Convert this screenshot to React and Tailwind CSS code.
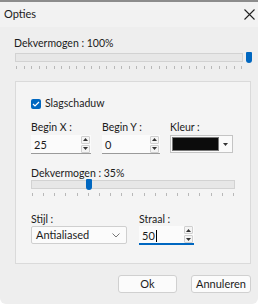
import React from 'react';

const font = { fontFamily: '"Segoe UI", Lato, "Noto Sans", sans-serif' };

const Ticks = ({ count }) => (
    <div className="flex justify-between px-[1px]">
        {Array.from({ length: count }).map((_, i) => (
            <span key={i} className="h-[3px] w-[1px] bg-[#b8b8b8]" />
        ))}
    </div>
);

const Slider = ({ thumbLeft, ticks }) => (
    <div>
        <div className="relative h-[9px] border border-[#d2d2d2] bg-[#e7e7e7]">
            <div
                className="absolute top-[-2px] h-[11px] w-[6px] rounded-b-[3px] rounded-t-[1px] bg-[#0067c0]"
                style={{ left: thumbLeft }}
            />
        </div>
        <div className="mt-[4px]">
            <Ticks count={ticks} />
        </div>
    </div>
);

const Spin = () => (
    <div className="flex w-[9px] flex-col gap-[1px]">
        <div className="flex h-[8px] items-center justify-center rounded-[1px] border border-[#cfcfcf] bg-[#f4f4f4]">
            <svg width="5" height="3" viewBox="0 0 5 3"><path d="M0 3 L2.5 0 L5 3 Z" fill="#333" /></svg>
        </div>
        <div className="flex h-[8px] items-center justify-center rounded-[1px] border border-[#cfcfcf] bg-[#f4f4f4]">
            <svg width="5" height="3" viewBox="0 0 5 3"><path d="M0 0 L2.5 3 L5 0 Z" fill="#333" /></svg>
        </div>
    </div>
);

const NumberInput = ({ value, width, focused }) => (
    <div
        className={`flex h-[19px] items-center justify-between bg-[#fbfbfb] pl-[3px] pr-[1px] ${
            focused ? 'border-b-2 border-[#0067c0]' : 'border-b border-[#9a9a9a]'
        }`}
        style={{ width }}
    >
        <span className="text-[11px] leading-none text-[#1a1a1a]">
            {value}
            {focused && <span className="ml-[1px] inline-block h-[12px] w-[1px] translate-y-[2px] bg-black" />}
        </span>
        <Spin />
    </div>
);

export default function App() {
    return (
        <div style={font} className="flex h-[304px] w-[258px] flex-col overflow-hidden rounded-b-[6px] border-t-2 border-[#8c8c8c] bg-[#eeeeee] text-[10.5px] text-[#1b1b1b]">
            {/* Title bar */}
            <div className="flex h-[25px] items-center justify-between bg-[#f2f2f2] pl-[4px] pr-[3px]">
                <span className="text-[11px]">Opties</span>
                <svg width="11" height="11" viewBox="0 0 11 11">
                    <path d="M0.5 0.5 L10.5 10.5 M10.5 0.5 L0.5 10.5" stroke="#222" strokeWidth="1.1" />
                </svg>
            </div>

            <div className="px-[14px] pt-[8px]">
                <div className="leading-[16px]">Dekvermogen : 100%</div>
                <div className="mt-[2px] pl-[1px] pr-[1px]">
                    <Slider thumbLeft={230} ticks={31} />
                </div>

                {/* Group box */}
                <div className="ml-[1px] mt-[12px] h-[183px] w-[236px] border border-[#dadada] bg-[#f4f4f4] pl-[15px] pt-[14px]">
                    <div className="flex h-[16px] items-center gap-[4px]">
                        <div className="flex h-[10px] w-[10px] items-center justify-center rounded-[2px] bg-[#0067c0]">
                            <svg width="8" height="6" viewBox="0 0 8 6">
                                <path d="M1 3 L3 5 L7 1" stroke="#fff" strokeWidth="1.2" fill="none" />
                            </svg>
                        </div>
                        <span>Slagschaduw</span>
                    </div>

                    <div className="mt-[7px] flex">
                        <div className="w-[71px]">
                            <div className="leading-[16px]">Begin X :</div>
                            <NumberInput value="25" width={60} />
                        </div>
                        <div className="w-[68px]">
                            <div className="leading-[16px]">Begin Y :</div>
                            <NumberInput value="0" width={58} />
                        </div>
                        <div>
                            <div className="leading-[16px]">Kleur :</div>
                            <div className="flex h-[18px] w-[63px] items-stretch border border-[#c4c4c4] bg-[#fafafa] p-[1px]">
                                <div className="flex-1 border border-[#777] bg-[#0c0c0c]" />
                                <div className="flex w-[12px] items-center justify-center">
                                    <svg width="5" height="3" viewBox="0 0 5 3"><path d="M0 0 L2.5 3 L5 0 Z" fill="#333" /></svg>
                                </div>
                            </div>
                        </div>
                    </div>

                    <div className="mt-[11px] leading-[16px]">Dekvermogen : 35%</div>
                    <div className="mt-[-1px] w-[204px]">
                        <Slider thumbLeft={54} ticks={19} />
                    </div>

                    <div className="mt-[15px] flex">
                        <div className="w-[108px]">
                            <div className="leading-[16px]">Stijl :</div>
                            <div className="mt-[-1px] flex h-[18px] w-[96px] items-center justify-between rounded-[2px] border border-[#cfcfcf] bg-[#fbfbfb] pl-[4px] pr-[6px]">
                                <span className="text-[11px]">Antialiased</span>
                                <svg width="8" height="5" viewBox="0 0 8 5">
                                    <path d="M0.5 0.5 L4 4 L7.5 0.5" stroke="#777" fill="none" />
                                </svg>
                            </div>
                        </div>
                        <div>
                            <div className="leading-[16px]">Straal :</div>
                            <div className="mt-[-1px]">
                                <NumberInput value="50" width={55} focused />
                            </div>
                        </div>
                    </div>
                </div>
            </div>

            {/* Buttons */}
            <div className="mt-[11px] flex justify-end gap-[14px] pr-[7px]">
                <button className="h-[18px] w-[59px] rounded-[3px] border border-[#d0d0d0] bg-[#fbfbfb] text-[11px]">Ok</button>
                <button className="h-[18px] w-[60px] rounded-[3px] border border-[#d0d0d0] bg-[#fbfbfb] text-[11px]">Annuleren</button>
            </div>
        </div>
    );
}
